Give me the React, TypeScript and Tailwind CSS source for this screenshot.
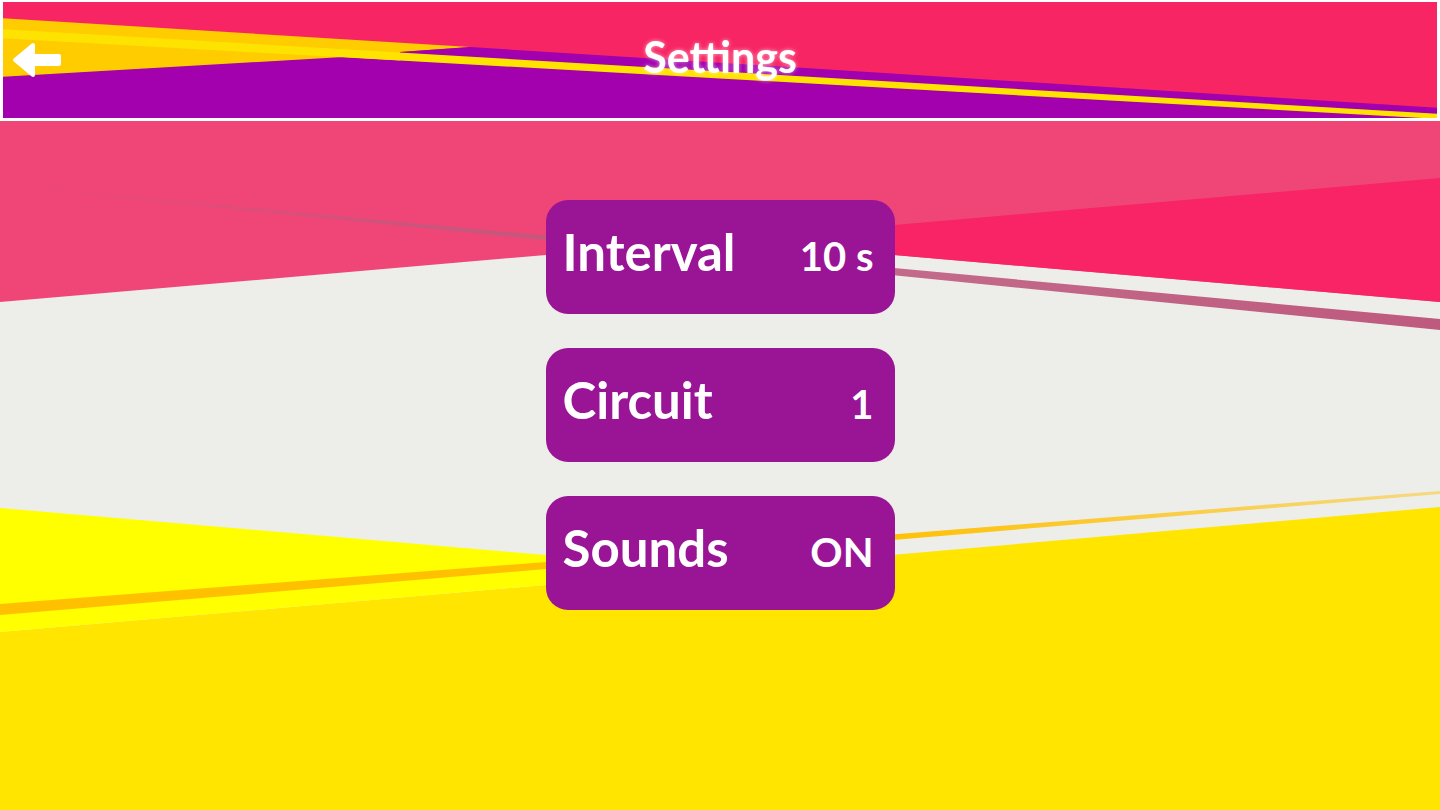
type Setting = { label: string; value: string };

const settings: Setting[] = [
  { label: 'Interval', value: '10 s' },
  { label: 'Circuit', value: '1' },
  { label: 'Sounds', value: 'ON' },
];

// header artwork, drawn in page coordinates
const HeaderArt = () => (
  <svg
    className="absolute inset-0 w-full h-full"
    viewBox="0 0 1434 116"
    preserveAspectRatio="none"
  >
    <g transform="translate(-3,-2)">
      <rect x="0" y="0" width="1440" height="130" fill="#F72564" />
      <polygon points="0,18 470,47 400,52 400,110 0,110" fill="#FFCC00" />
      <polygon points="400,52 470,47 1440,108 1440,130 400,130" fill="#A200AE" />
      <polygon points="0,77 343,57 1440,122 1440,130 0,130" fill="#A300AE" />
      <polygon points="0,29 1440,114 1440,119 0,38" fill="#FFE300" />
    </g>
  </svg>
);

// body artwork: pink wedges at top, yellow wedges at bottom
const BodyArt = () => (
  <svg
    className="absolute inset-0 w-full h-full"
    viewBox="0 0 1440 689"
    preserveAspectRatio="none"
  >
    <defs>
      <linearGradient id="mauve" x1="15" y1="0" x2="1440" y2="0" gradientUnits="userSpaceOnUse">
        <stop offset="0" stopColor="#BE5A7E" stopOpacity="0" />
        <stop offset="0.3" stopColor="#BE5A7E" stopOpacity="0.8" />
        <stop offset="1" stopColor="#BE5A7E" stopOpacity="1" />
      </linearGradient>
      <linearGradient id="orange" x1="0" y1="0" x2="1440" y2="0" gradientUnits="userSpaceOnUse">
        <stop offset="0" stopColor="#FFC000" />
        <stop offset="0.6" stopColor="#FFC000" />
        <stop offset="1" stopColor="#FFC000" stopOpacity="0.45" />
      </linearGradient>
    </defs>
    <g transform="translate(0,-121)">
      <rect x="0" y="121" width="1440" height="689" fill="#EDEEEA" />
      <polygon points="0,121 1440,121 1440,302 720,240 0,302" fill="#EF4677" />
      <polygon points="720,240 1440,178 1440,302" fill="#F82465" />
      <polygon points="15,186 1440,319 1440,330 15,187" fill="url(#mauve)" />
      <polygon points="0,632 720,570 1440,507 1440,810 0,810" fill="#FFE500" />
      <polygon points="0,508 720,570 0,632" fill="#FFFF00" />
      <polygon points="0,604 546,562 1440,491 1440,494 546,569 0,615" fill="url(#orange)" />
    </g>
  </svg>
);

const BackArrow = () => (
  <svg width="50" height="36" viewBox="0 0 50 36">
    <polygon
      points="3,18 21,3 21,14 47,14 47,22 21,22 21,33"
      fill="#fff"
      stroke="#fff"
      strokeWidth="4"
      strokeLinejoin="round"
    />
  </svg>
);

const SettingCard = ({ label, value }: Setting) => (
  <button className="w-[349px] h-[114px] rounded-[22px] bg-[#9A1496] flex items-baseline justify-between pl-[17px] pr-[21px] pt-[21px] text-white font-bold">
    <span className="text-[51px] leading-[1.2]">{label}</span>
    <span className="text-[40px] leading-[1.2]">{value}</span>
  </button>
);

export default function App() {
  return (
    <div className="w-[1440px] h-[810px] bg-white flex flex-col pt-[2px] overflow-hidden font-['Lato','Noto_Sans',sans-serif]">
      <header className="relative mx-[3px] h-[116px] shrink-0">
        <HeaderArt />
        <div className="relative h-full grid grid-cols-[1fr_auto_1fr] items-center">
          <div className="pl-[9px] flex items-center">
            <button className="flex items-center">
              <BackArrow />
            </button>
          </div>
          <h1 className="text-white font-bold text-[43px] leading-[1.2] pb-[6px] drop-shadow-[0_0_2px_rgba(255,255,255,0.6)]">
            Settings
          </h1>
          <div />
        </div>
      </header>

      <main className="relative mt-[3px] flex-1">
        <BodyArt />
        <div className="relative flex flex-col items-center pt-[79px] gap-[34px]">
          {settings.map((s) => (
            <SettingCard key={s.label} label={s.label} value={s.value} />
          ))}
        </div>
      </main>
    </div>
  );
}
